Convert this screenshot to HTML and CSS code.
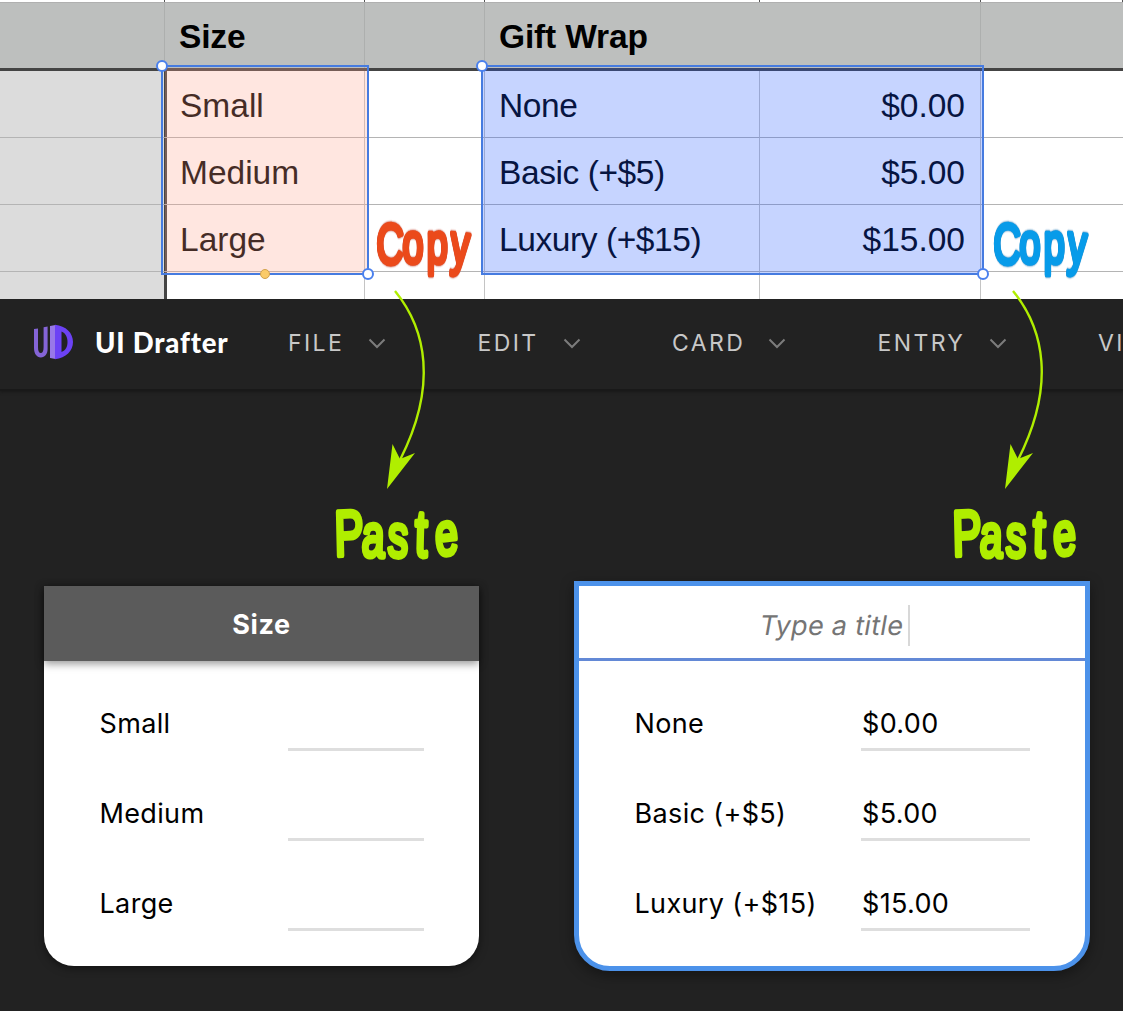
FILE: index.html
```html
<!DOCTYPE html>
<html lang="en">
<head>
<meta charset="utf-8">
<title>UI Drafter</title>
<link rel="stylesheet" href="styles.css">
</head>
<body>
<main class="page">
  <section class="sheet">
    <div class="row top"><i></i><i></i><i></i><i></i><i></i><i></i></div>
    <div class="row head"><span></span><span>Size</span><span></span><span class="wide">Gift Wrap</span><span></span></div>
    <div class="row"><span class="side"></span><span>Small</span><span></span><span>None</span><span class="num">$0.00</span><span></span></div>
    <div class="row"><span class="side"></span><span>Medium</span><span></span><span>Basic (+$5)</span><span class="num">$5.00</span><span></span></div>
    <div class="row"><span class="side"></span><span>Large</span><span></span><span>Luxury (+$15)</span><span class="num">$15.00</span><span></span></div>
    <div class="row last"><span class="side"></span><span></span><span></span><span></span><span></span><span></span></div>
    <div class="selection red"><b class="handle start"></b><b class="dot"></b><b class="handle end"></b></div>
    <div class="selection blue"><b class="handle start"></b><b class="handle end"></b></div>
  </section>

  <header class="bar">
    <svg class="logo" viewBox="0 0 40 36" width="40" height="36">
      <path d="M0 5 4 4.400V23c0 4 1 6 2.800 6s2.800-2 2.800-6V3.300L13.600 2.600V25c0 5-2.600 8.400-6.800 8.400S0 29.500 0 24Z" fill="#8464d6"/>
      <path d="M16 2 21.500 1V35L16 34Z" fill="#9878e8"/>
      <path fill-rule="evenodd" d="M21 .8C32 2 39 9 39 18S32 34 21 35.200ZM27.500 7.500V28C31.500 26.500 33.500 23 33.500 18S31.500 9 27.500 7.500Z" fill="#6c42f5"/>
    </svg>
    <span class="brand">UI Drafter</span>
    <nav class="menu">
      <span class="item file"><span>FILE</span><svg class="chev" viewBox="0 0 18 11"><path d="M1.500 1.500 9 9l7.500-7.500"/></svg></span>
      <span class="item edit"><span>EDIT</span><svg class="chev" viewBox="0 0 18 11"><path d="M1.500 1.500 9 9l7.500-7.500"/></svg></span>
      <span class="item card-menu"><span>CARD</span><svg class="chev" viewBox="0 0 18 11"><path d="M1.500 1.500 9 9l7.500-7.500"/></svg></span>
      <span class="item entry"><span>ENTRY</span><svg class="chev" viewBox="0 0 18 11"><path d="M1.500 1.500 9 9l7.500-7.500"/></svg></span>
      <span class="item"><span>VIEW</span></span>
    </nav>
  </header>

  <section class="canvas">
    <article class="card size">
      <h2>Size</h2>
      <div class="entry-row"><span>Small</span><span class="field"></span></div>
      <div class="entry-row"><span>Medium</span><span class="field"></span></div>
      <div class="entry-row"><span>Large</span><span class="field"></span></div>
    </article>
    <article class="card gift">
      <h2><span class="placeholder">Type a title</span><span class="caret"></span></h2>
      <div class="entry-row"><span>None</span><span class="field">$0.00</span></div>
      <div class="entry-row"><span>Basic (+$5)</span><span class="field">$5.00</span></div>
      <div class="entry-row"><span>Luxury (+$15)</span><span class="field">$15.00</span></div>
    </article>
  </section>

  <svg class="notes" viewBox="0 0 1123 1011" width="1123" height="1011">
    <defs>
      <g id="arrow">
        <path d="M395 291C426 329 438 385 400 460" fill="none" stroke="#b0ee00" stroke-width="2.400"/>
        <path d="M387 489 392.500 444 400 459 415 453Z" fill="#b0ee00"/>
      </g>
    </defs>
    <use href="#arrow"/>
    <use href="#arrow" x="618"/>
    <text class="note copy-red" transform="translate(376 263) scale(.66 1)" x="0 40 77 112" rotate="2 0 0 4">Copy</text>
    <text class="note copy-blue" transform="translate(993 263) scale(.66 1)" x="0 40 77 112" rotate="2 0 0 4">Copy</text>
    <text class="note paste" transform="translate(335 556) scale(.68 1)" x="0 39 77 117 149" rotate="-2 2 3 2 -5">P<tspan class="low">as</tspan><tspan class="tee">t</tspan><tspan class="low">e</tspan></text>
    <text class="note paste" transform="translate(953 556) scale(.68 1)" x="0 39 77 117 149" rotate="-2 2 3 2 -5">P<tspan class="low">as</tspan><tspan class="tee">t</tspan><tspan class="low">e</tspan></text>
  </svg>
</main>
</body>
</html>
```

FILE: styles.css
```css
* { box-sizing: border-box; }
body { margin: 0; background: #222; }
.page {
  position: relative;
  width: 1123px;
  height: 1011px;
  overflow: hidden;
  font-family: Inter, "Liberation Sans", sans-serif;
}

/* spreadsheet */
.sheet {
  position: relative;
  height: 298.500px;
  background: #fff;
  overflow: hidden;
  font: 33.500px/66px "Liberation Sans", Arial, sans-serif;
  color: #000;
}
.row {
  display: grid;
  grid-template-columns: 165px 200px 120px 275px 221px 142px;
  grid-template-rows: 100%;
  height: 67px;
}
.row > span {
  padding: 1px 15px 0;
  border-right: 1px solid #c4c4c4;
  border-bottom: 1px solid #b4b4b4;
  line-height: 67px;
  white-space: nowrap;
}
.row > span:last-child { border-right: 0; }
.row > .side {
  width: 167px;
  background: #dcdcdc;
  border-right: 3px solid #444;
}
.row:not(.head) > span:nth-child(4) { padding-left: 14px; letter-spacing: -.420px; }
.row > .num { text-align: right; }
.row.top { height: 2px; }
.top i { border-right: 1px solid #555; }
.row.head {
  height: 69px;
  background: #bdbfbe;
  border-top: 1px solid #b0b0b0;
  border-bottom: 3px solid #444;
  font-weight: bold;
}
.row.head > span { border-bottom: 0; border-color: #adafae; padding: 1px 14px 0; line-height: 66px; letter-spacing: -.15px; }
.head > .wide { grid-column: span 2; }
.selection {
  position: absolute;
  top: 65px;
  height: 210px;
  border: 2px solid #467be0;
}
.selection::before {
  content: "";
  position: absolute;
  inset: 1px 0 0 2px;
}
.red { left: 161px; width: 208px; }
.red::before { background: rgba(255, 163, 141, .270); }
.blue { left: 481px; width: 503px; }
.blue::before { left: 0; background: rgba(28, 84, 255, .250); }
.handle {
  position: absolute;
  width: 12px;
  height: 12px;
  border: 2px solid #4a80ee;
  border-radius: 50%;
  background: #fff;
}
.start { left: -7px; top: -7px; }
.end { right: -6.500px; bottom: -7px; }
.dot {
  position: absolute;
  left: 97px;
  bottom: -6px;
  width: 10px;
  height: 10px;
  border: 1px solid #d2a24c;
  border-radius: 50%;
  background: #fbcb68;
}

/* application bar */
.bar {
  display: flex;
  align-items: center;
  height: 92px;
  padding: 0 0 1px 34px;
  background: #222;
  border-bottom: 2px solid #191919;
  box-shadow: 0 1px 3px #181818;
}
.logo { flex: none; margin: -2px 21px 0 0; }
.brand {
  width: 193px;
  flex: none;
  font: 900 27.500px/36px Lato, sans-serif;
  letter-spacing: .800px;
  color: #fff;
  white-space: nowrap;
}
.menu { display: flex; flex: none; gap: 91.500px; }
.item {
  display: flex;
  justify-content: space-between;
  align-items: center;
  font-size: 23px;
  line-height: 32px;
  letter-spacing: 2.400px;
  color: #c8c8c8;
}
.file { width: 98px; }
.edit { width: 103px; }
.card-menu { width: 114px; }
.entry { width: 129px; }
.chev { width: 18px; height: 11px; fill: none; stroke: #7c7c7c; stroke-width: 2; }

/* cards */
.canvas {
  display: flex;
  align-items: flex-start;
  gap: 95px;
  padding: 190.500px 0 0 44px;
}
.card {
  background: #fff;
  font-size: 27px;
  color: #000;
}
.size {
  width: 435px;
  height: 380px;
  margin-top: 5px;
  border-radius: 0 0 30px 30px;
  box-shadow: 0 2px 8px rgba(0, 0, 0, .5);
}
.card h2 {
  display: flex;
  justify-content: center;
  align-items: center;
  height: 75px;
  margin: 0;
  font-size: 27px;
}
.size h2 {
  padding-top: 1px;
  background: #5b5b5b;
  color: #fff;
  letter-spacing: .600px;
  box-shadow: 0 3px 8px rgba(0, 0, 0, .4);
}
.gift {
  width: 516px;
  height: 390px;
  border: 5px solid #4c92ea;
  border-radius: 0 0 36px 36px;
  box-shadow: 0 4px 14px rgba(0, 0, 0, .4);
}
.gift h2 {
  border-bottom: 3px solid #6389d6;
  font-weight: 400;
  color: #757575;
  gap: 4px;
  padding: 6px 0 0 6px;
}
.placeholder { transform: skewX(-10deg); letter-spacing: .3px; }
.caret { width: 2px; height: 41px; background: #d8d8d8; }
.entry-row {
  display: flex;
  justify-content: space-between;
  height: 90px;
  padding: 42px 55px 0 55.500px;
  line-height: 42px;
  letter-spacing: .350px;
  white-space: nowrap;
}
.field {
  width: 136px;
  height: 48px;
  border-bottom: 3px solid #dedede;
}
.gift .field { width: 169px; padding-left: 1px; }

/* hand-drawn notes */
.notes { position: absolute; inset: 0; }
.note {
  font: 57px "Liberation Sans", sans-serif;
  stroke-width: 4.500;
  stroke-linejoin: round;
}
.note.copy-red { fill: #eb4a1b; stroke: #eb4a1b; filter: drop-shadow(0 0 .8px #b92a14); }
.note.copy-blue { fill: #079be9; stroke: #079be9; filter: drop-shadow(0 0 .8px #0568ad); }
.note.paste { font-size: 64px; fill: #b0ee00; stroke: #b0ee00; stroke-width: 5; }
.low { font-size: 60px; }
.tee { font-size: 66px; }
```
